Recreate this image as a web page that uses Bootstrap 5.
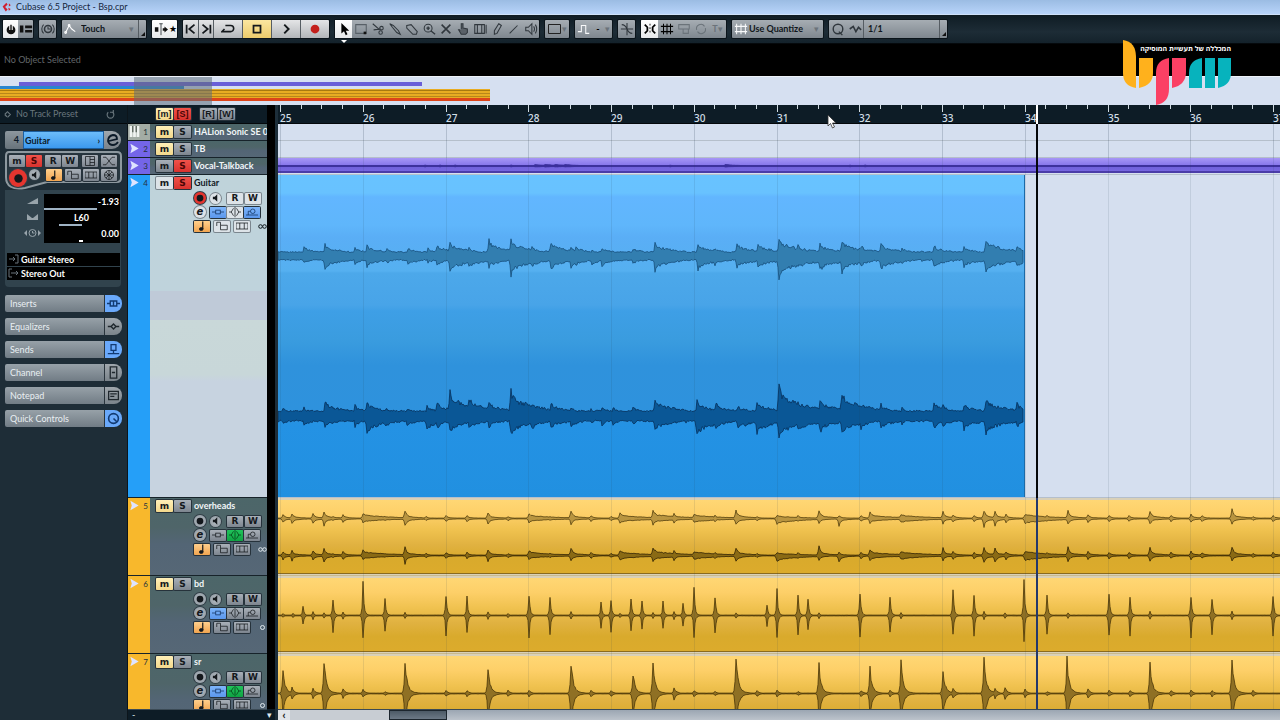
<!DOCTYPE html>
<html lang="en">
<head>
<meta charset="utf-8">
<meta name="viewport" content="width=device-width, initial-scale=1">
<title>Cubase 6.5 Project - Bsp.cpr</title>
<link rel="stylesheet" href="https://cdn.jsdelivr.net/npm/bootstrap@5.3.0/dist/css/bootstrap.min.css">
<style>
:root{--ui:Lato,"Noto Sans",sans-serif;--num:"Noto Sans","Open Sans",sans-serif}
body{font-family:var(--ui);font-size:9px;line-height:12px;color:#dfe8ee;background:#1b2a35;height:100vh;overflow:hidden}
button,select{font:inherit;color:inherit;border:0;padding:0;margin:0;border-radius:0;background:none;appearance:none}
svg{display:block;flex:none}
.ic{width:16px;height:16px;fill:none;stroke:currentColor;stroke-width:1.2}
.titlebar{height:15px;background:linear-gradient(#9bbce3,#b8d4fa);color:#16263c;gap:4px;padding-left:2px;border-bottom:1px solid #cfe2fa}
.titlebar .ic{width:10px;height:10px}
.toolbar{height:29px;background:linear-gradient(#0f1c24,#1d2c36 60%,#14222b);gap:6px;padding:0 3px;border-bottom:1px solid #05090c}
.toolbar .ic{width:14px;height:14px}
.grp{height:18px;background:linear-gradient(#a6adb3,#7f878f);border-radius:1px;color:#30373d;overflow:hidden;box-shadow:0 0 0 1px #0b141a}
.grp>*{height:18px;display:flex;align-items:center;justify-content:center}
.w15{width:15px}.w17{width:17px}.w29{width:29px}.w8{width:8px}
.g-mode{width:84px}.g-col{width:24px}.g-nudge{width:37px}.g-grid{width:91px}.g-q{width:118px}
.lit{background:linear-gradient(#fff,#e6e8ea)}
.grp.bright{background:linear-gradient(#e4e5e7,#b3b6ba);color:#14181c}
.grp.bright>*+*,.corner{border-left:1px solid #565d63}
.yel{background:linear-gradient(#fbe6a0,#eccb6c)!important}
.dim{color:#6b737a}
.corner.w8::after{content:"";border:2px solid transparent;border-right-color:#111;border-bottom-color:#111;margin:9px 0 0 1px}
.tools{position:relative;overflow:visible}
.tools::after{content:"";position:absolute;left:6px;top:20px;width:0;height:0;border:3px solid transparent;border-top-color:#fff;border-bottom:0}
.sel{font-weight:700;color:#10161b;text-align:left}
.infoline{height:32px;background:#000;color:#62676b;padding-left:4px}
.overview{height:29px;background:#d6e0f1;border-top:1px solid #eef2f9;overflow:hidden}
.inspector{width:128px;background:#1e2d37;border-right:1px solid #0c151b}
.strip19{height:19px;background:#0d1c26;border-bottom:1px solid #04080b;flex:none}
.preset{color:#69767d;padding:0 12px 0 3px}
.panel{margin:7px 6px 0 5px}
.namebar{height:18px;border-radius:2px 9px 9px 2px;overflow:hidden;color:#0c1a28;font-weight:700;line-height:17px}
.namebar .num{width:18px;background:linear-gradient(#8d979e,#68737b)}
.namebar .nm{background:linear-gradient(#6cbcfa,#3c99ee);border:1px solid #1c5e9e;padding:0 3px 0 1px}
.namebar .ed{width:17px;background:linear-gradient(#a1a8ae,#7a828a)}
.ctl{height:39px;position:relative;margin-top:2px}
.ctl .frame{position:absolute;left:0;top:0}
.ctl .r{position:relative;padding-left:4px}
.ctl .r+.r{margin-top:2px}
.ctl .sb{width:16px}
.pair{gap:1px}
.rwp{gap:2px;margin-left:6px}
.sb{width:17px;height:12px;background:linear-gradient(#a9b0b8,#7d858f);color:#14181c;border-radius:1px;display:inline-flex;align-items:center;justify-content:center;font:700 9px/12px "DejaVu Sans",sans-serif;box-shadow:0 0 0 1px #26323b;flex:none}
.sb.br{font:700 9px/12px "Liberation Sans",sans-serif}
.sb .ic,.rb .ic{width:12px;height:12px;stroke-width:1}
.m-on{background:linear-gradient(#fff0b8,#f3d88c)}
.s-on{background:linear-gradient(#f0524a,#d8322e);color:#4a0606}
.b-on{background:linear-gradient(#7db5fb,#5b97ec);color:#10315f}
.g-on{background:linear-gradient(#1fc35a,#10a343);color:#063c18}
.o-on{background:linear-gradient(#ffcf8c,#f2a550)}
.rb{width:12px;height:12px;border-radius:50%;background:radial-gradient(#bac1c7,#89929b);color:#14181c;display:inline-flex;align-items:center;justify-content:center;box-shadow:0 0 0 1px #323e47;flex:none;font:italic 700 10px/10px "DejaVu Sans",sans-serif}
.rb.sm{width:11px;height:11px}
.rb.sm .ic{width:10px;height:10px}
.rb.rec{background:#e5352f}
.rb.big{width:18px;height:18px}
.rb.big .ic{width:15px;height:15px}
.values{background:#31434d;border-radius:0 0 4px 4px;padding:0 1px 6px 2px}
.val{height:16px}
.val .ico{width:37px;color:#98a4ab;display:flex;justify-content:center;padding-left:13px}
.val .fld{background:#000;font-weight:700;line-height:15px;color:#fff;height:17px;padding-right:1px;flex:1;display:flex;flex-direction:column}
.mtr{height:2px;margin-top:-1px;background:#9fb3c4}
.routes{padding-top:11px}
.route{background:#000;height:13px;margin-bottom:1px;font-weight:700;line-height:13px;color:#fff;gap:1px}
.sect{height:17px;border-radius:2px 8px 8px 2px;overflow:hidden;margin:0 6px 6px 5px;width:117px;color:#e9eff2}
.sect .t{background:linear-gradient(#97a1a8,#717c85);padding-left:5px;text-align:left;line-height:17px}
.sect .k{width:18px;border-left:1px solid #2a353d;background:linear-gradient(#a0a7ad,#7b848b);color:#20282e;display:flex;align-items:center;justify-content:center}
.sect .k.on{background:#6aa9fb;color:#123a72}
.sect .ic{width:13px;height:13px}
.tracklist{width:139px;background:#0d1c26}
.tophd{padding-left:28px;gap:1px}
.trk{display:flex;overflow:hidden;flex:none;border-bottom:1px solid #17232a}
.h-s{height:17px}.h-l{height:323px}.h-m{height:78px}
.bar22{width:22px;flex:none;color:#dfe4ff;display:flex;justify-content:space-between;padding:2px 2px 0 1px;line-height:12px;font-size:8px}
.bar22 i{font-style:normal;color:#26323b}
.bar22 svg{width:11px;height:11px}
.cnt{flex:1;min-width:0;background:linear-gradient(#4c6669,#4f6569 38%,#536575 60%,#566776);padding-left:6px;white-space:nowrap;overflow:hidden}
.cnt.sel-t{background:linear-gradient(#bfd3da,#bfd3dc 36%,#bfcad8 36%,#bfcad8 45%,#c9d8d9 45%,#c8d7d9 62%,#c7d3e0 64%);color:#10181e}
.hd{height:16px;gap:1px;line-height:16px;color:#f2f6f8}
.sel-t .hd{color:#10181e}
.hd b{font-weight:700;padding-left:2px}
.rw{height:14px;padding-left:38px}
.rw .sb{width:16px;height:11px}
.sel-t .sb:not([class*="-on"]),.sel-t .rb:not(.rec){background:#dde3e8;box-shadow:0 0 0 1px #7b868e}
.gutter{width:11px;background:#000;border-right:3px solid #1d2e3a}
.gutter span{background:#0d1c26;height:11px;line-height:11px}
.arrange{background:#d5dfef;position:relative;overflow:hidden}
.lane{overflow:hidden;flex:none;border-bottom:1px solid #b5bfcb}
.lane svg{width:100%;height:100%}
.ev-p{height:15px;background:linear-gradient(#a797f6,#8a7aec 50%,#6e5fda 55%,#7667e0);border-bottom:2px solid #4a3ca8}
.ev-b{width:747px;max-width:100%;height:322px;background:linear-gradient(#68c3ff,#68c2ff 18px,#62b6ff 22px,#5fb6fb 50px,#5aaef6 62px,#55b0f0 96px,#4ca8ea 98px,#48a4e8 130px,#3e9fe6 136px,#3a9cdf 165px,#2f92dc 190px,#2e92dd 238px,#2492e4 250px,#2190e0);border-right:1px solid #1b6aa8}
.ev-o{height:74px;margin-top:2px;background:linear-gradient(#ffd774,#fdcf68 20%,#efc14e 42%,#e0b140 62%,#d9aa2c 80%,#dcab2c);border-bottom:1px solid #8a6a20}
.lane.or{background:#d9d0b8;border-color:#c9b98c}
.over{position:absolute;left:0;top:19px;width:100%;height:calc(100% - 30px);pointer-events:none}
.playhead{position:absolute;left:758px;top:0;bottom:11px;width:2px;background:linear-gradient(#fff 19px,#05070a 19px,#05070a 393px,#24386b 393px)}
.mouse{position:absolute;left:549px;top:9px}
.foot{height:11px;background:#0d1c26;border-top:1px solid #3b4a55;flex:none;line-height:9px}
.hs{background:linear-gradient(#9ba6b2,#bcc3cb)}
.hs button{width:12px;background:#e1e4e8;color:#222;font-size:12px;line-height:8px;font-weight:700}
.hs .pre{width:99px;background:#c8cdd3}
.hs .thumb{width:58px;background:linear-gradient(#4c5a66,#6c7986);border:1px solid #1c262e}
.logo{position:absolute;right:46px;top:38px}
.barno,.tagline{font-family:var(--num)}
</style>
</head>
<body class="d-flex flex-column">
<svg width="0" height="0" class="position-absolute" aria-hidden="true">
<symbol id="wave3" viewBox="0 0 16 16"><path d="M2 1l12 7-12 7 2-7z" fill="currentColor" stroke="none"/></symbol>
<symbol id="keys" viewBox="0 0 16 16"><path d="M1 0h4v16H1zM6 0h4v16H6zM11 0h4v16h-4z" fill="#f0f3f0" stroke="none"/><path d="M5.500 0v9M10.500 0v9" stroke="#59625b" stroke-width="2"/></symbol>
<symbol id="spk" viewBox="0 0 16 16"><path d="M3 6h3l4-4v12l-4-4H3z" fill="currentColor" stroke="none"/></symbol>
<symbol id="dot" viewBox="0 0 16 16"><circle cx="8" cy="8" r="4.500" fill="currentColor" stroke="none"/></symbol>
<symbol id="ins" viewBox="0 0 16 16"><path d="M0 8h5M11 8h5"/><rect x="5" y="5.500" width="6" height="5"/></symbol>
<symbol id="inss" viewBox="0 0 16 16"><path d="M0 8h4M12 8h4M4 5h8v6H4zM8 5v6" stroke-width="1.700"/></symbol>
<symbol id="eq" viewBox="0 0 16 16"><path d="M0 8h3M13 8h3M6 3L3 8l3 5M10 3l3 5-3 5M8 1v14"/></symbol>
<symbol id="eqs" viewBox="0 0 16 16"><path d="M1 8h4M11 8h4M8 5l3 3-3 3-3-3z" stroke-width="1.700"/></symbol>
<symbol id="snd" viewBox="0 0 16 16"><path d="M0 12h16M3 12V7h3"/><circle cx="9" cy="7" r="3"/></symbol>
<symbol id="sends" viewBox="0 0 16 16"><path d="M5 2h6v7H5zM8 9v4M1 13h14" stroke-width="1.600"/></symbol>
<symbol id="note" viewBox="0 0 16 16"><path d="M9 2v10" stroke-width="1.600"/><ellipse cx="7" cy="12" rx="2.500" ry="2" fill="currentColor"/></symbol>
<symbol id="lock" viewBox="0 0 16 16"><path d="M1 8V3h5v4M6 7h9v6H6z"/></symbol>
<symbol id="lan" viewBox="0 0 16 16"><path d="M0 4h16v8H0zM5 4v8M11 4v8"/></symbol>
<symbol id="xf" viewBox="0 0 16 16"><path d="M0 3h4l8 10h4M0 13h4l8-10h4"/></symbol>
<symbol id="pan" viewBox="0 0 16 16"><path d="M2 2h12v12H2zM8 2v12M8 6h6M8 10h6"/></symbol>
<symbol id="wheel" viewBox="0 0 16 16"><circle cx="8" cy="8" r="6"/><path d="M8 2v12M2 8h12M4 4l8 8M12 4l-8 8"/></symbol>
<symbol id="logo-red" viewBox="0 0 16 16"><path d="M1 7l6-6 2 3-4 4 4 4-3 3zM11 2l3 3-3 2zM10 9l4 2-3 3z" fill="#cf2030" stroke="none"/></symbol>
<symbol id="chan" viewBox="0 0 16 16"><path d="M4 1h8v14H4zM6 8h4" stroke-width="1.600"/></symbol>
<symbol id="pad" viewBox="0 0 16 16"><path d="M2 3h12v10H2zM4 6h8M4 9h5" stroke-width="1.600"/></symbol>
<symbol id="knob" viewBox="0 0 16 16"><circle cx="8" cy="8" r="6" stroke-width="2"/><path d="M8 8l4 4" stroke-width="2"/></symbol>
</svg>

<header class="titlebar d-flex align-items-center flex-shrink-0"><svg class="ic"><use href="#logo-red"/></svg><span>Cubase 6.5 Project - Bsp.cpr</span></header>

<nav class="toolbar d-flex align-items-center flex-shrink-0" aria-label="Project toolbar">
<div class="grp d-flex flex-shrink-0"><button class="w15 lit" aria-label="Constrain"><svg class="ic" viewBox="0 0 16 16"><circle cx="8" cy="9" r="5" fill="#111" stroke="none"/><path d="M8 3v6" stroke="#fff" stroke-width="4"/><path d="M8 3v6" stroke="#111" stroke-width="1.600"/></svg></button><button class="w15" aria-label="Layout"><svg class="ic" viewBox="0 0 16 16"><path d="M1 4h4v8H1zM7 4h8v3H7zM7 9h8v3H7z" fill="#111" stroke="none"/></svg></button></div>
<div class="grp flex-shrink-0"><button class="w17" aria-label="Auto-scroll"><svg class="ic" viewBox="0 0 16 16"><circle cx="8" cy="8" r="4" stroke-width="1.800"/><path d="M8 5v3h3M3 3a7 7 0 0 0 0 10M13 3a7 7 0 0 1 0 10"/></svg></button></div>
<div class="grp g-mode d-flex flex-shrink-0"><span class="w15 text-white"><svg class="ic" viewBox="0 0 16 16"><path d="M3 12L7 4l3 4 4 3"/><circle cx="3" cy="12" r="1"/><circle cx="7" cy="4" r="1"/></svg></span><select class="sel flex-fill px-1" aria-label="Automation mode"><option>Touch</option></select><span class="dim px-1">▾</span><button class="w8 corner" aria-label="Automation panel"></button></div>
<div class="grp lit d-flex flex-shrink-0"><button class="w17" aria-label="Auto-scroll mode"><svg class="ic" viewBox="0 0 16 16"><path d="M8 2v13M6 2h4" stroke-width="1"/><path d="M1 6h4v5H1zM10 7h2V5l4 3.500-4 3.500v-2h-2z" fill="#111" stroke="none"/></svg></button><button class="w8 text-black" aria-label="Suspend">★</button></div>
<div class="grp bright d-flex flex-shrink-0">
<button class="w15" aria-label="Previous marker"><svg class="ic" viewBox="0 0 16 16"><path d="M3 3v10M12 3L6 8l6 5" stroke-width="2"/></svg></button>
<button class="w15" aria-label="Next marker"><svg class="ic" viewBox="0 0 16 16"><path d="M13 3v10M4 3l6 5-6 5" stroke-width="2"/></svg></button>
<button class="w29" aria-label="Cycle"><svg class="ic" viewBox="0 0 16 16"><path d="M5 4h6a3.500 3.500 0 0 1 0 7H1l3-3" stroke-width="1.800"/></svg></button>
<button class="w29 yel" aria-label="Stop"><svg class="ic" viewBox="0 0 16 16"><path d="M4 4h8v8H4z" stroke-width="2"/></svg></button>
<button class="w29" aria-label="Play"><svg class="ic" viewBox="0 0 16 16"><path d="M6 3l5 5-5 5" stroke-width="2.200"/></svg></button>
<button class="w29" aria-label="Record"><svg class="ic" viewBox="0 0 16 16"><circle cx="8" cy="8" r="5" fill="#c4201c" stroke="none"/></svg></button></div>
<div class="grp tools d-flex flex-shrink-0">
<button class="w17 lit" aria-label="Select"><svg class="ic" viewBox="0 0 16 16"><path d="M5 1v12l3-2.500L10 15l2-1-2-4h4z" fill="#000" stroke="none"/></svg></button>
<button class="w17" aria-label="Range"><svg class="ic" viewBox="0 0 16 16"><path d="M2 3h12v10H2z" stroke="#586067"/><path d="M11 11h3v3h-3z" fill="#111" stroke="none"/></svg></button>
<button class="w17" aria-label="Split"><svg class="ic" viewBox="0 0 16 16"><path d="M2 2l8 7M3 9l8-1"/><circle cx="12" cy="7" r="2"/><circle cx="11" cy="12" r="2"/></svg></button>
<button class="w17" aria-label="Glue"><svg class="ic" viewBox="0 0 16 16"><path d="M2 2l4 2 6 6 2 4-4-2-5-6z"/></svg></button>
<button class="w17" aria-label="Erase"><svg class="ic" viewBox="0 0 16 16"><path d="M2 4l5-1 7 8-1 3H9L2 7z"/></svg></button>
<button class="w17" aria-label="Zoom"><svg class="ic" viewBox="0 0 16 16"><circle cx="7" cy="7" r="4.500"/><path d="M10 10l5 4M7 5v4M5 7h4" stroke-width="1.600"/></svg></button>
<button class="w17" aria-label="Mute"><svg class="ic" viewBox="0 0 16 16"><path d="M3 3l10 10M13 3L3 13" stroke-width="1.800"/></svg></button>
<button class="w17" aria-label="Time warp"><svg class="ic" viewBox="0 0 16 16"><path d="M6 8V2h2v5l5 1v4l-2 2H6L3 9h2" fill="#5a6168"/></svg></button>
<button class="w17" aria-label="Comp"><svg class="ic" viewBox="0 0 16 16"><path d="M2 3h11v10H2zM5 3v10M10 3v10M15 3v10"/></svg></button>
<button class="w17" aria-label="Draw"><svg class="ic" viewBox="0 0 16 16"><path d="M10 2l3 2-5 9-3 1V10z"/></svg></button>
<button class="w17" aria-label="Line"><svg class="ic" viewBox="0 0 16 16"><path d="M3 13l9-9"/></svg></button>
<button class="w17" aria-label="Play tool"><svg class="ic" viewBox="0 0 16 16"><path d="M2 6h3l4-4v12l-4-4H2zM11 5q2 3 0 6M13 3q3 5 0 10"/></svg></button></div>
<div class="grp g-col flex-shrink-0"><button class="w-100" aria-label="Colour"><svg width="15" height="12" fill="none" stroke="#222"><path d="M1.500 1.500h12v9h-12z"/></svg><span class="dim">▾</span></button></div>
<div class="grp g-nudge flex-shrink-0"><button class="w-100 justify-content-around" aria-label="Nudge"><svg class="ic text-light" viewBox="0 0 16 16"><path d="M1 11h4V4h5v9h4"/></svg><b class="text-black">-</b><span class="dim">▾</span></button></div>
<div class="grp flex-shrink-0"><button class="w17" aria-label="Snap to zero crossing"><svg class="ic" viewBox="0 0 16 16"><path d="M1 8h14M8 1v14M2 3q4 0 6 5t6 5"/></svg></button></div>
<div class="grp d-flex flex-shrink-0"><button class="w17 lit text-black" aria-label="Snap"><svg class="ic" viewBox="0 0 16 16"><path d="M2 3l3 3v4l-3 3M14 3l-3 3v4l3 3" stroke-width="2"/><path d="M8 2v12" stroke-dasharray="2 2" stroke-width="1"/></svg></button><button class="w17 text-black" aria-label="Grid"><svg class="ic" viewBox="0 0 16 16"><path d="M4 2v12M12 2v12M1 5h14M1 11h14M8 2v12"/></svg></button><button class="w17 dim" aria-label="Snap type"><svg class="ic" viewBox="0 0 16 16"><path d="M2 3h12v5H2zM7 8h6v5H7z"/></svg></button><button class="w17 dim" aria-label="Relative"><svg class="ic" viewBox="0 0 16 16"><path d="M3 9a5 5 0 0 1 9-4M13 7a5 5 0 0 1-9 4"/></svg></button><button class="w17 dim" aria-label="Type"><b>T</b>▾</button></div>
<div class="grp g-grid d-flex flex-shrink-0"><span class="w17 text-light"><svg class="ic" viewBox="0 0 16 16"><path d="M3 2v12M8 2v12M13 2v12M1 5h14M1 11h14"/></svg></span><select class="sel flex-fill" aria-label="Grid type"><option>Use Quantize</option></select><span class="dim px-1">▾</span></div>
<div class="grp g-q d-flex flex-shrink-0"><button class="w17" aria-label="Quantize"><svg class="ic" viewBox="0 0 16 16"><circle cx="8" cy="8" r="5.500" stroke-width="1.600"/><path d="M9 11l4 4" stroke-width="1.600"/></svg></button><button class="w17" aria-label="Iterative"><svg class="ic" viewBox="0 0 16 16"><path d="M2 8l4-3 3 6 3-5 3 3" stroke-width="1.800"/></svg></button><select class="sel corner flex-fill px-1" aria-label="Quantize preset"><option>1/1</option></select><button class="w8 corner" aria-label="Quantize panel"></button></div>
</nav>

<div class="infoline d-flex align-items-center flex-shrink-0">No Object Selected</div>
<div class="overview flex-shrink-0"><svg width="100%" height="28" shape-rendering="crispEdges"><g id="ov"></g></svg></div>

<main class="d-flex flex-fill overflow-hidden">
<aside class="inspector flex-shrink-0">
<div class="strip19 preset d-flex align-items-center"><svg width="9" height="9" viewBox="0 0 16 16" fill="none" stroke="currentColor" stroke-width="2"><path d="M3 8l5-5 5 5-5 5M3 8l4 4"/></svg><span class="flex-fill ps-1">No Track Preset</span><svg width="9" height="9" viewBox="0 0 16 16" fill="none" stroke="currentColor" stroke-width="2"><path d="M4 4a6 6 0 1 0 8 0M7 4h6V0"/></svg></div>
<section class="panel">
<div class="namebar d-flex"><span class="num text-end pe-1">4</span><span class="nm flex-fill d-flex justify-content-between align-items-center">Guitar<span>›</span></span><button class="ed d-flex align-items-center justify-content-center" aria-label="Edit channel"><svg class="ic" viewBox="0 0 16 16"><path d="M4 9l8-2q0-4-4-4-5 1-5 6 1 4 5 4 3 0 5-3" stroke-width="1.800"/></svg></button></div>
<div class="ctl"><svg class="frame" width="117" height="39" fill="#27363f" stroke="#8d989f" stroke-width="2"><path d="M4 1h108q4 0 4 4v22q0 4-4 4H42L20 37Q1 40 1 26V5q0-4 3-4z"/></svg>
<div class="r d-flex pt-1 justify-content-between pe-1"><span class="d-flex pair"><button class="sb">m</button><button class="sb s-on">S</button></span><span class="d-flex pair"><button class="sb">R</button><button class="sb">W</button></span><button class="sb" aria-label="Panner"><svg class="ic"><use href="#pan"/></svg></button><button class="sb" aria-label="Auto fades"><svg class="ic"><use href="#xf"/></svg></button></div>
<div class="r d-flex align-items-start justify-content-between pe-1"><button class="rb rec big" aria-label="Record enable"><svg class="ic"><use href="#dot"/></svg></button><button class="rb sm" aria-label="Monitor"><svg class="ic"><use href="#spk"/></svg></button><button class="sb o-on ms-1" aria-label="Timebase"><svg class="ic"><use href="#note"/></svg></button><button class="sb" aria-label="Lock"><svg class="ic"><use href="#lock"/></svg></button><button class="sb" aria-label="Lanes"><svg class="ic"><use href="#lan"/></svg></button><button class="sb" aria-label="Freeze"><svg class="ic"><use href="#wheel"/></svg></button></div></div>
<div class="values pt-1">
<div class="val d-flex"><span class="ico"><svg width="11" height="12"><path d="M0 10L11 4v6z" fill="currentColor"/></svg></span><span class="fld"><span class="text-end">-1.93</span><span class="mtr" style="width:71%"></span></span></div>
<div class="val d-flex"><span class="ico"><svg width="11" height="12"><path d="M0 4l5 4h1l5-4v6H0z" fill="currentColor"/></svg></span><span class="fld"><span class="text-center">L60</span><span class="mtr" style="width:30%;margin-left:20%"></span></span></div>
<div class="val d-flex"><span class="ico"><svg width="17" height="13" fill="none" stroke="currentColor"><circle cx="8.500" cy="7" r="3.500"/><path d="M8.500 5v2h2"/><path d="M3 4L0 7l3 3zM14 4l3 3-3 3z" fill="currentColor" stroke="none"/></svg></span><span class="fld"><span class="text-end">0.00</span><span class="mtr bg-white" style="width:5%;margin-left:47%"></span></span></div>
<div class="routes"><div class="route d-flex"><svg width="13" height="12" fill="none" stroke="#6b757c"><path d="M2 6h6M6 4l2 2-2 2M8 2h3v8H8"/></svg>Guitar Stereo</div><div class="route d-flex"><svg width="13" height="12" fill="none" stroke="#6b757c"><path d="M5 2H2v8h3M4 6h7M9 4l2 2-2 2"/></svg>Stereo Out</div></div>
</div>
</section>
<div class="pt-2" id="sections"></div>
</aside>

<section class="tracklist flex-shrink-0 d-flex flex-column overflow-hidden">
<div class="strip19 tophd d-flex align-items-center"><button class="sb br m-on">[m]</button><button class="sb br s-on">[S]</button><button class="sb br ms-2">[R]</button><button class="sb br">[W]</button></div>
<div id="tracks" class="flex-fill overflow-hidden d-flex flex-column"></div>
<div class="foot px-1">-</div>
</section>
<div class="gutter flex-shrink-0 d-flex flex-column justify-content-end"><span>▾</span></div>
<section class="arrange flex-fill d-flex flex-column">
<div class="strip19"><svg id="ruler" width="100%" height="19" shape-rendering="crispEdges"></svg></div>
<div id="lanes" class="flex-fill overflow-hidden d-flex flex-column">
<div class="lane h-s"></div><div class="lane h-s"></div>
<div class="lane h-s"><div class="ev-p"><svg data-w="voc"></svg></div></div>
<div class="lane h-l"><div class="ev-b"><svg data-w="gtr"></svg></div></div>
<div class="lane h-m or"><div class="ev-o"><svg data-w="oh"></svg></div></div>
<div class="lane h-m or"><div class="ev-o"><svg data-w="bd"></svg></div></div>
<div class="lane h-m or"><div class="ev-o"><svg data-w="sr"></svg></div></div>
</div>
<div class="foot hs d-flex"><button aria-label="Scroll left">‹</button><span class="pre"></span><span class="thumb"></span></div>
<svg class="over" id="grid" shape-rendering="crispEdges"></svg>
<div class="playhead"></div>
<svg class="mouse" width="10" height="16" viewBox="0 0 10 16"><path d="M1 1v11l2.500-2.500L5.500 14l2-1-2-4H9z" fill="#fff" stroke="#333" stroke-width=".8"/></svg>
</section>
</main>

<svg class="logo" width="114" height="70" viewBox="0 0 114 70">
<g fill="#ffb11c"><path d="M3 2q13 2 13 17v31Q3 48 3 35z"/><path d="M19 20h14v15q0 12-14 15z"/></g>
<g fill="#fb4064"><path d="M49 20v31q0 14-13 16V35q0-13 13-15z"/><path d="M52 20h14v14q0 13-14 16z"/></g>
<g fill="#07b3bd"><path d="M82 20v30H69V35q0-13 13-15zM85 20h10v30H85zM98 20h13v15q0 12-13 15z"/></g>
<text class="tagline" x="111" y="13" direction="rtl" font-size="7" font-weight="700" fill="#fff">המכללה של תעשיית המוסיקה</text>
</svg>

<script>
const use = n => `<svg class="ic"><use href="#${n}"/></svg>`;

// Inspector sections
document.getElementById('sections').innerHTML = [
  ['Inserts','inss',1],['Equalizers','eqs',0],['Sends','sends',1],['Channel','chan',0],['Notepad','pad',0],['Quick Controls','knob',1]
].map(([t,i,on]) => `<button class="sect d-flex"><span class="t flex-fill">${t}</span><span class="k h-100 ${on?'on':''}">${use(i)}</span></button>`).join('');

// Track list
const tracks = [
  {n:'HALion Sonic SE 0',c:'#a3aca4',k:'keys',h:'h-s',m:1},
  {n:'TB',c:'#7465e8',h:'h-s',m:1},
  {n:'Vocal-Talkback',c:'#7465e8',h:'h-s',s:1},
  {n:'Guitar',c:'#259ff8',h:'h-l',s:1,sel:1,rec:1,f:['b-on','','b-on'],link:'oo'},
  {n:'overheads',c:'#f8b82c',h:'h-m',m:1,f:['','g-on',''],link:'oo'},
  {n:'bd',c:'#f8b82c',h:'h-m',m:1,f:['b-on','',''],link:'o'},
  {n:'sr',c:'#f8b82c',h:'h-m',m:1,f:['b-on','g-on',''],link:'o'}
];
document.getElementById('tracks').innerHTML = tracks.map((t,i) => `
<div class="trk ${t.h}"><div class="bar22" style="background:${t.c}">${use(t.k||'wave3')}<i>${i+1}</i></div>
<div class="cnt ${t.sel?'sel-t':''}"><div class="hd d-flex align-items-center"><button class="sb ${t.m?'m-on':''}">m</button><button class="sb ${t.s?'s-on':''}">S</button><b>${t.n}</b></div>
${t.f?`<div class="rw d-flex align-items-center"><button class="rb ${t.rec?'rec':''}" aria-label="Record enable">${use('dot')}</button><button class="rb sm ms-1" aria-label="Monitor">${use('spk')}</button><span class="d-flex rwp"><button class="sb">R</button><button class="sb">W</button></span></div>
<div class="rw d-flex align-items-center"><button class="rb me-1" aria-label="Edit">e</button><span class="d-flex pair">${['ins','eq','snd'].map((k,j)=>`<button class="sb ${t.f[j]}" aria-label="${k}">${use(k)}</button>`).join('')}</span></div>
<div class="rw d-flex align-items-center gap-1"><button class="sb o-on" aria-label="Timebase">${use('note')}</button><button class="sb" aria-label="Lock">${use('lock')}</button><button class="sb" aria-label="Lanes">${use('lan')}</button><svg class="ms-auto" width="9" height="7" fill="none" stroke="currentColor">${t.link==='oo'?'<circle cx="2.500" cy="3.500" r="1.800"/><circle cx="6.500" cy="3.500" r="1.800"/>':'<circle cx="4.500" cy="3.500" r="2"/>'}</svg></div>`:''}
</div></div>`).join('');

// Overview: [x, y, width, height, colour]
document.getElementById('ov').innerHTML = [
  [19,5,403,4,'#6a5fd8'],[0,9,184,3,'#2a86cf'],[0,12,490,12,'#e8ac22'],[0,13,490,1,'#a9790f'],[0,16,490,1,'#b9861a'],[0,19,490,1,'#b9861a'],[0,21,490,3,'#dd4419'],
  [134,0,78,28,'rgba(95,110,122,.55)']
].map(([x,y,w,h,c]) => `<rect x="${x}" y="${y}" width="${w}" height="${h}" fill="${c}"/>`).join('');

// Ruler and bar lines; one bar is 331 quarter-pixels wide
const BAR = 331/4, X0 = 278;
const LAST = document.getElementById('ruler').clientWidth;
let r = '', g = '';
for (let q = 0; 2 + q*BAR/4 < LAST; q++) {
  const x = Math.round(2 + q*BAR/4);
  r += `<rect x="${x}" y="0" width="1" height="${q%4?4:7}" fill="#cfdae0"/>`;
  if (q%4 === 0) {
    r += `<text class="barno" x="${x}" y="17" font-size="10" font-weight="500" fill="#d2dfe6">${25+q/4}</text>`;
    g += `<rect x="${x}" y="0" width="1" height="34" fill="rgba(40,60,80,.2)"/><rect x="${x}" y="34" width="1" height="2000" fill="rgba(40,60,80,.11)"/>`;
  }
}
document.getElementById('ruler').innerHTML = r;
document.getElementById('grid').innerHTML = g;

// Waveforms. A hit is [x, height above, height below, sustain]
let seed = 7;
const rnd = () => (seed = (seed*16807)%2147483647)/2147483647;
function wave(cy, hits, o) {
  let up = '', dn = [];
  for (let x = X0; x <= o.end; x++) {
    let u = o.base, d = o.base;
    for (const [hx,a,b=a,s=o.sus] of hits) {
      const t = x-hx; if (t < -2) continue;
      const e = t < 0 ? (t === -1 ? o.att : o.att/4) : (1-s)*Math.exp(-t/o.fast) + s*Math.exp(-t/(s > .45 ? o.slow : o.slow/2));
      u = Math.max(u, a*e); d = Math.max(d, b*e);
    }
    const j = 1 + (rnd()-.5)*o.jit, k = 1 + (rnd()-.5)*o.jit;
    up += `L${x-X0} ${(cy-u*j).toFixed(1)}`;
    dn.unshift(`L${x-X0} ${(cy+d*k).toFixed(1)}`);
  }
  const mid = o.mid ? `<path d="M0 ${cy}H${o.end-X0}" stroke="${o.mid}" stroke-width="1"/>` : '';
  return `${mid}<path d="M0 ${cy}${up}${dn.join('')}Z" fill="${o.fill}" stroke="${o.line}" stroke-width=".8"/>`;
}
const gUp = [[283,4],[304,9,7],[325,11,12],[355,8],[367,10,11],[387,7],[408,8,9],[428,7],[437,11,9],[450,13,16],[469,8,12],[489,15,11],[511,16,18],[532,9,11],[551,13],[571,9,11],[576,9],[592,6,9],[602,8,10],[613,5],[633,8],[655,13,14],[685,5],[698,12,13],[715,8,9],[737,12],[758,12],[779,17,22],[798,10],[820,12,15],[842,15,16],[851,7],[861,10],[881,12,14],[902,8],[922,5],[934,10,11],[943,5],[964,9,11],[986,16],[1004,5],[1017,9,11]];
const gDn = [[283,8],[304,8,10],[325,14,11],[343,5],[355,10],[367,13,17,.7],[386,7,10,.8],[407,7,9,.8],[427,10,14],[437,13,12],[450,23,16],[469,18,13],[489,14,11],[511,24,19],[532,9,13],[551,13],[571,8,11],[591,7],[602,9],[613,9],[633,9,8],[655,17,15],[675,6],[686,7],[697,14,20,.7],[716,13,12],[738,9,13,.8],[757,14,18],[779,28,22],[798,10,14,.8],[820,16],[842,23,18],[851,8],[861,9,12],[881,11,13,.7],[902,8],[922,5],[934,13,12],[943,10],[964,12,13],[986,17,18],[1004,8],[1017,12,11]];
const oh = [[283,4],[292,5],[313,5],[324,7],[333,2],[343,4],[363,5,4,.7],[385,2],[405,8],[426,2],[446,3],[467,3],[488,6],[508,2],[529,5,4,.6],[550,2],[571,8,6],[591,3],[611,2],[620,5,5,.6],[653,8,6,.5],[674,5],[694,4,4,.8],[715,3],[736,8,6,.4],[757,2],[777,3,6,.7],[798,3],[819,9,5],[839,3,7],[861,3],[870,6,5,.5],[901,4,4,.8],[943,7,5],[953,4],[974,3],[984,8,8],[995,7],[1006,4],[1025,4,5,.9],[1047,3],[1068,8,6],[1088,4],[1109,3],[1129,3],[1150,8,6],[1171,3],[1191,4],[1202,3],[1232,9,6],[1253,2],[1273,3]];
const bd = [[303,9],[333,17],[363,30,23],[385,17],[446,21],[467,18],[529,22],[550,19],[601,12],[611,15],[631,16],[642,14],[663,13],[683,12],[694,27,22],[715,20],[767,10],[777,24,21],[798,18],[808,16],[860,24,21],[890,19],[953,25,21],[974,20],[1024,32,23],[1047,20],[1109,22],[1130,18],[1191,20],[1212,18],[1273,20],[283,2],[293,2],[313,4,4],[324,3],[343,4],[405,3],[488,4],[508,2],[571,4],[620,2],[653,3],[674,4],[736,3],[819,3],[901,3],[984,4],[1005,3],[1068,3],[1150,4],[1232,4]];
const sr = [[283,22],[324,32],[405,33],[488,26],[571,32],[633,20],[653,30],[736,36],[819,28],[870,24],[901,30],[943,23],[984,37],[1067,33],[1150,30],[1232,32],[292,6],[313,5],[343,5],[363,4],[385,2],[446,3],[467,3],[508,3],[529,3],[591,3],[611,3],[674,6],[694,3],[715,2],[757,3],[777,3],[798,2],[861,3],[890,3],[953,5],[995,5],[1005,6],[1025,4],[1047,2],[1088,5],[1109,3],[1130,3],[1171,3],[1191,3],[1212,3],[1253,3]];
const guitar = {base:4,sus:.7,fast:2,slow:40,att:.5,jit:.35,end:1023};
const kit = {base:.4,sus:.3,fast:1.5,slow:14,att:.4,jit:.3,end:3200,line:'#4a3608',mid:'#2a1e04'};
const draw = {
  voc: wave(8, [[425,1],[440,1],[455,1],[511,1],[535,1.5,1,1],[545,1.5,1,1],[555,1.5,1,1],[565,1.5,1,1],[670,1],[725,1.5,1,1],[850,1],[865,1]], {...kit,base:.2,fill:'#3a2f9a',line:'#3a2f9a',mid:'#2a2070'}),
  gtr: wave(81, gUp, {...guitar,fill:'#327eb0',line:'#174f7c'}) + wave(241, gDn, {...guitar,base:5,fill:'#0a5796',line:'#06305a'}),
  oh: wave(18.5, oh, {...kit,slow:30,fill:'#b99540',line:'#54400e'}) + wave(55.5, oh, {...kit,slow:30,fill:'#8a6a14',line:'#332404'}),
  bd: wave(37.5, bd, {...kit,sus:.12,slow:6,fast:.9,att:.25,fill:'#8f7024'}),
  sr: wave(37.5, sr, {...kit,sus:.12,fast:2,att:.3,fill:'#8f7024'})
};
document.querySelectorAll('svg[data-w]').forEach(s => s.innerHTML = draw[s.dataset.w]);
</script>
<script src="https://cdn.jsdelivr.net/npm/bootstrap@5.3.0/dist/js/bootstrap.bundle.min.js"></script>
</body>
</html>
